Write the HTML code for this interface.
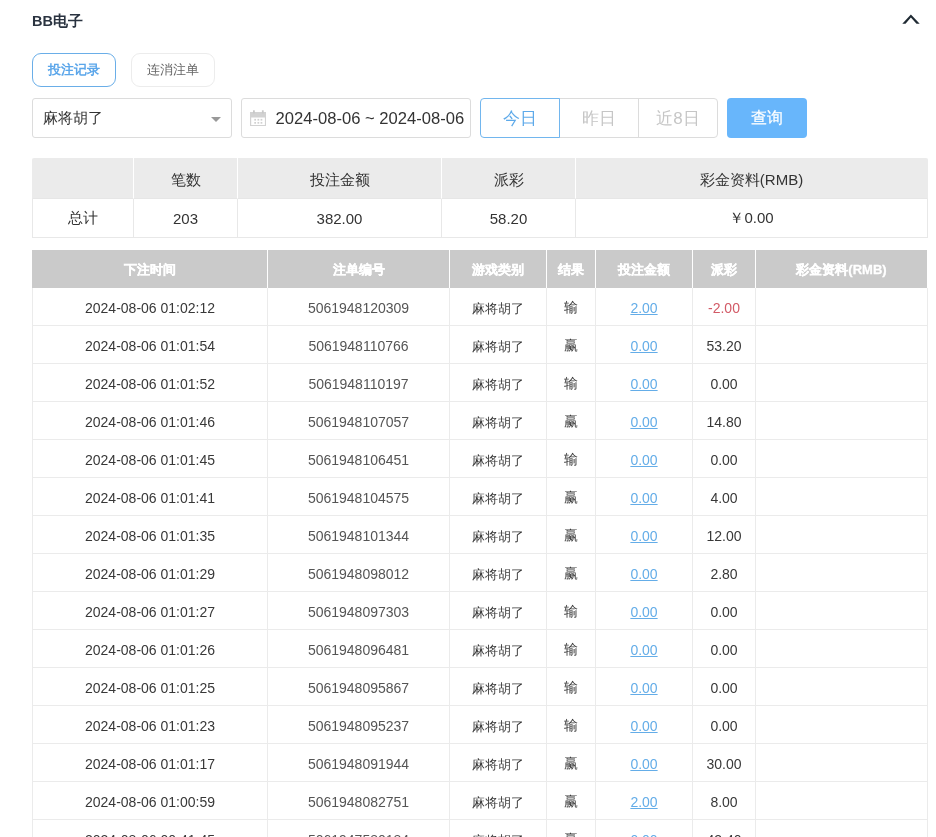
<!DOCTYPE html>
<html><head><meta charset="utf-8">
<style>
*{box-sizing:border-box;margin:0;padding:0}
html,body{width:936px;height:837px;overflow:hidden;background:#fff;font-family:"Liberation Sans",sans-serif;color:#333}
.abs{position:absolute}
.title{left:32px;top:12px;font-size:14.5px;font-weight:bold;color:#2a3340;line-height:18px}
.chev{left:900px;top:10px;width:22px;height:18px}
.tab{top:53px;height:34px;width:84px;border-radius:9px;font-size:13px;text-align:center;line-height:32px}
.tab1{left:32px;border:1px solid #6aaee8;color:#5ba6ea;font-weight:bold}
.tab2{left:131px;border:1px solid #ececec;color:#666}
.sel{left:32px;top:98px;width:200px;height:40px;border:1px solid #dcdcdc;border-radius:3px;font-size:15px;line-height:38px;padding-left:10px;color:#333}
.caret{left:211px;top:117px;width:0;height:0;border-left:5px solid transparent;border-right:5px solid transparent;border-top:5px solid #999}
.date{left:241px;top:98px;width:230px;height:40px;border:1px solid #dcdcdc;border-radius:3px;font-size:16.6px;line-height:39px;padding-left:33.5px;color:#333;white-space:nowrap}
.bg{top:98px;height:40px;font-size:17px;line-height:40px;text-align:center;color:#c6c6c6;border:1px solid #dcdcdc}
.b1{left:480px;width:80px;border:1px solid #72b6ee;color:#5eaaea;border-radius:4px 0 0 4px;z-index:2}
.b2{left:559px;width:80px}
.b3{left:638px;width:80px;border-radius:0 4px 4px 0}
.q{left:727px;top:98px;width:80px;height:40px;background:#68b6fb;border-radius:4px;color:#fff;font-size:16px;font-weight:normal;-webkit-text-stroke:0.2px #fff;line-height:40px;text-align:center}
table{border-collapse:separate;border-spacing:0;table-layout:fixed;position:absolute;left:32px;width:896px}
td,th{text-align:center;white-space:nowrap;overflow:hidden;padding:0}
.sum{top:158px}
.sum th{height:41px;background:#ebebeb;font-weight:normal;font-size:15px;color:#333;border-left:1px solid #fff;border-bottom:1px solid #e6e6e6;padding-top:4px}
.sum th:first-child{border-left:1px solid #ebebeb}
.sum th:last-child{border-right:1px solid #ebebeb;border-top-right-radius:2px}
.sum th:first-child{border-top-left-radius:2px}
.sum td{height:39px;font-size:15px;color:#333;border-left:1px solid #e8e8e8;border-bottom:1px solid #e8e8e8}
.sum td:last-child{border-right:1px solid #e8e8e8}
.data{top:250px}
.data th{height:38px;background:#cacaca;color:#fff;font-weight:bold;font-size:13px;border-left:1px solid #fff;padding-top:2px;-webkit-text-stroke:0.3px #fff}
.data th:first-child{border-left:1px solid #cacaca}
.data th:last-child{border-right:1px solid #fff}
.data td{height:38px;font-size:14px;color:#383838;border-left:1px solid #ebebeb;border-bottom:1px solid #ebebeb;padding-top:2px}
.data td:last-child{border-right:1px solid #ebebeb}
.data td.n{color:#555}
.data td.c{font-size:13px;padding-top:5px}
.lk{color:#64ade8;text-decoration:underline}
.red{color:#d25a66}
body{will-change:transform}</style></head><body>
<div class="abs title">BB电子</div>
<svg class="abs" style="left:890px;top:0" width="46" height="40" viewBox="0 0 46 40"><polygon points="12.3,23.7 20.9,14.4 29.7,23.7 26.5,23.7 20.9,17.6 15.5,23.7" fill="#1f2a33"/></svg>
<div class="abs tab tab1">投注记录</div>
<div class="abs tab tab2">连消注单</div>
<div class="abs sel">麻将胡了</div>
<div class="abs caret"></div>
<div class="abs date">2024-08-06 ~ 2024-08-06</div>
<svg class="abs" style="left:250px;top:110px" width="16" height="16" viewBox="0 0 16 16"><rect x="0.6" y="2.6" width="14.9" height="13" fill="none" stroke="#d2d2d2" stroke-width="1.2"/><rect x="0.6" y="2.3" width="14.9" height="5.2" fill="#d2d2d2"/><rect x="3" y="0.3" width="1.8" height="3.2" fill="#c8c8c8"/><rect x="11.9" y="0.3" width="1.8" height="3.2" fill="#c8c8c8"/><g fill="#d0d0d0"><rect x="4.3" y="8.9" width="1.7" height="1.7"/><rect x="7.5" y="8.9" width="1.7" height="1.7"/><rect x="10.6" y="8.9" width="1.7" height="1.7"/><rect x="4.3" y="12" width="1.7" height="1.7"/><rect x="7.5" y="12" width="1.7" height="1.7"/><rect x="10.6" y="12" width="1.7" height="1.7"/></g></svg>
<div class="abs bg b2">昨日</div>
<div class="abs bg b3">近8日</div>
<div class="abs bg b1">今日</div>
<div class="abs q">查询</div>

<table class="sum">
<colgroup><col style="width:101px"><col style="width:104px"><col style="width:204px"><col style="width:134px"><col style="width:353px"></colgroup>
<tr><th></th><th>笔数</th><th>投注金额</th><th>派彩</th><th>彩金资料(RMB)</th></tr>
<tr><td>总计</td><td>203</td><td>382.00</td><td>58.20</td><td>￥0.00</td></tr>
</table>

<table class="data">
<colgroup><col style="width:235px"><col style="width:182px"><col style="width:97px"><col style="width:49px"><col style="width:97px"><col style="width:63px"><col style="width:173px"></colgroup>
<tr><th>下注时间</th><th>注单编号</th><th>游戏类别</th><th>结果</th><th>投注金额</th><th>派彩</th><th>彩金资料(RMB)</th></tr>
<tr><td>2024-08-06 01:02:12</td><td class="n">5061948120309</td><td class="c">麻将胡了</td><td>输</td><td><span class="lk">2.00</span></td><td><span class="red">-2.00</span></td><td></td></tr>
<tr><td>2024-08-06 01:01:54</td><td class="n">5061948110766</td><td class="c">麻将胡了</td><td>赢</td><td><span class="lk">0.00</span></td><td><span>53.20</span></td><td></td></tr>
<tr><td>2024-08-06 01:01:52</td><td class="n">5061948110197</td><td class="c">麻将胡了</td><td>输</td><td><span class="lk">0.00</span></td><td><span>0.00</span></td><td></td></tr>
<tr><td>2024-08-06 01:01:46</td><td class="n">5061948107057</td><td class="c">麻将胡了</td><td>赢</td><td><span class="lk">0.00</span></td><td><span>14.80</span></td><td></td></tr>
<tr><td>2024-08-06 01:01:45</td><td class="n">5061948106451</td><td class="c">麻将胡了</td><td>输</td><td><span class="lk">0.00</span></td><td><span>0.00</span></td><td></td></tr>
<tr><td>2024-08-06 01:01:41</td><td class="n">5061948104575</td><td class="c">麻将胡了</td><td>赢</td><td><span class="lk">0.00</span></td><td><span>4.00</span></td><td></td></tr>
<tr><td>2024-08-06 01:01:35</td><td class="n">5061948101344</td><td class="c">麻将胡了</td><td>赢</td><td><span class="lk">0.00</span></td><td><span>12.00</span></td><td></td></tr>
<tr><td>2024-08-06 01:01:29</td><td class="n">5061948098012</td><td class="c">麻将胡了</td><td>赢</td><td><span class="lk">0.00</span></td><td><span>2.80</span></td><td></td></tr>
<tr><td>2024-08-06 01:01:27</td><td class="n">5061948097303</td><td class="c">麻将胡了</td><td>输</td><td><span class="lk">0.00</span></td><td><span>0.00</span></td><td></td></tr>
<tr><td>2024-08-06 01:01:26</td><td class="n">5061948096481</td><td class="c">麻将胡了</td><td>输</td><td><span class="lk">0.00</span></td><td><span>0.00</span></td><td></td></tr>
<tr><td>2024-08-06 01:01:25</td><td class="n">5061948095867</td><td class="c">麻将胡了</td><td>输</td><td><span class="lk">0.00</span></td><td><span>0.00</span></td><td></td></tr>
<tr><td>2024-08-06 01:01:23</td><td class="n">5061948095237</td><td class="c">麻将胡了</td><td>输</td><td><span class="lk">0.00</span></td><td><span>0.00</span></td><td></td></tr>
<tr><td>2024-08-06 01:01:17</td><td class="n">5061948091944</td><td class="c">麻将胡了</td><td>赢</td><td><span class="lk">0.00</span></td><td><span>30.00</span></td><td></td></tr>
<tr><td>2024-08-06 01:00:59</td><td class="n">5061948082751</td><td class="c">麻将胡了</td><td>赢</td><td><span class="lk">2.00</span></td><td><span>8.00</span></td><td></td></tr>
<tr><td>2024-08-06 00:41:45</td><td class="n">5061947580184</td><td class="c">麻将胡了</td><td>赢</td><td><span class="lk">0.00</span></td><td><span>43.40</span></td><td></td></tr>

</table>
</body></html>
